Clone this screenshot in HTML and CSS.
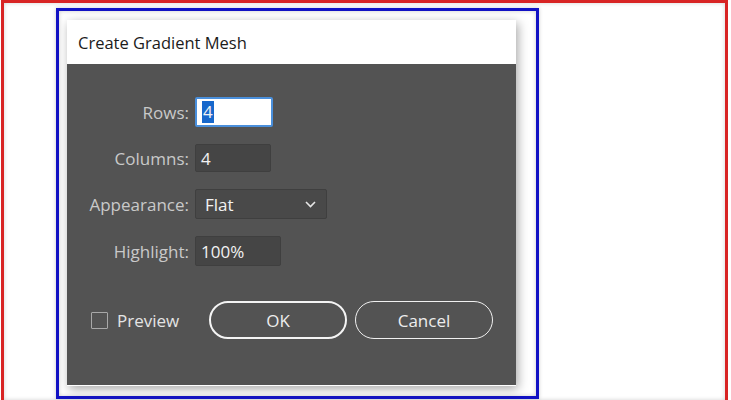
FILE: index.html
```html
<!DOCTYPE html>
<html>
<head>
<meta charset="utf-8">
<link rel="stylesheet" href="styles.css">
</head>
<body>
<div class="frame">
  <div class="outline">
    <div class="dialog">
      <div class="titlebar">Create Gradient Mesh</div>
      <div class="body">
        <div class="form">
          <label class="label">Rows:</label>
          <div class="field field-active"><span class="sel">4</span></div>
          <label class="label">Columns:</label>
          <div class="field field-cols">4</div>
          <label class="label">Appearance:</label>
          <div class="field field-select"><span>Flat</span>
            <svg class="chev" width="11" height="7" viewBox="0 0 11 7"><polyline points="1,1 5.5,5.5 10,1" fill="none" stroke="#e6e6e6" stroke-width="1.6"/></svg>
          </div>
          <label class="label">Highlight:</label>
          <div class="field field-hl">100%</div>
        </div>
        <div class="actions">
          <div class="check"><span class="box"></span><span class="check-text">Preview</span></div>
          <div class="btn btn-ok">OK</div>
          <div class="btn btn-cancel">Cancel</div>
        </div>
      </div>
    </div>
  </div>
</div>
</body>
</html>
```

FILE: styles.css
```css
html, body {
  margin: 0;
  padding: 0;
  background: #ffffff;
  overflow: hidden;
}
body {
  width: 731px;
  height: 400px;
  font-family: "Open Sans", "Noto Sans", sans-serif;
}
.frame {
  margin-left: 1px;
  width: 727px;
  height: 400px;
  box-sizing: border-box;
  border: 3px solid #d82424;
  border-bottom: none;
  padding: 5px 0 0 52px;
  box-shadow: inset 0 0 4px rgba(0,0,0,0.18);
  overflow: hidden;
}
.outline {
  width: 483px;
  height: 391px;
  box-sizing: border-box;
  border: 3px solid #1212c4;
  padding: 9px 0 0 8px;
  box-shadow: 0 0 4px rgba(0,0,0,0.2), inset 0 0 4px rgba(0,0,0,0.2);
}
.dialog {
  width: 449px;
  background: #ffffff;
  padding-bottom: 1px;
  box-shadow: 2px 3px 10px rgba(0,0,0,0.35);
}
.titlebar {
  height: 44px;
  display: flex;
  align-items: center;
  padding-left: 11px;
  padding-top: 1px;
  box-sizing: border-box;
  font-size: 16.5px;
  color: #1b1b1b;
}
.body {
  background: #535353;
  height: 321px;
  padding-top: 33px;
  box-sizing: border-box;
}
.form {
  display: grid;
  grid-template-columns: 122px auto;
  column-gap: 6px;
  row-gap: 17px;
  align-items: center;
}
.label {
  text-align: right;
  font-size: 17px;
  color: #c9c9c9;
}
.field {
  height: 30px;
  box-sizing: border-box;
  background: #454545;
  border: 1px solid #3f3f3f;
  border-radius: 2px;
  color: #f2f2f2;
  font-size: 17px;
  display: flex;
  align-items: center;
  padding-left: 5px;
}
.field-active {
  width: 78px;
  background: #ffffff;
  border: 2px solid #4a8fdb;
  padding-left: 5px;
  justify-self: start;
}
.sel {
  background: #1768cc;
  color: #f2f2f2;
  height: 22px;
  line-height: 22px;
  padding: 0 1px;
}
.field-cols {
  width: 76px;
  height: 28px;
}
.field-select {
  width: 132px;
  justify-content: space-between;
  padding-left: 9px;
  padding-right: 10px;
  background: #494949;
}
.chev { display: block; }
.field-hl {
  width: 86px;
}
.actions {
  display: flex;
  align-items: center;
  margin-top: 35px;
  padding-left: 24px;
}
.check {
  display: flex;
  align-items: center;
  width: 118px;
}
.box {
  width: 17px;
  height: 17px;
  box-sizing: border-box;
  border: 1px solid #a8a8a8;
  border-radius: 1px;
  margin-right: 9px;
}
.check-text {
  font-size: 17px;
  color: #e4e4e4;
}
.btn {
  width: 138px;
  height: 38px;
  box-sizing: border-box;
  border-radius: 19px;
  display: flex;
  align-items: center;
  justify-content: center;
  font-size: 17px;
  color: #ededed;
}
.btn-ok {
  border: 2.5px solid #f4f4f4;
}
.btn-cancel {
  border: 1.5px solid #f0f0f0;
  margin-left: 8px;
}
```
